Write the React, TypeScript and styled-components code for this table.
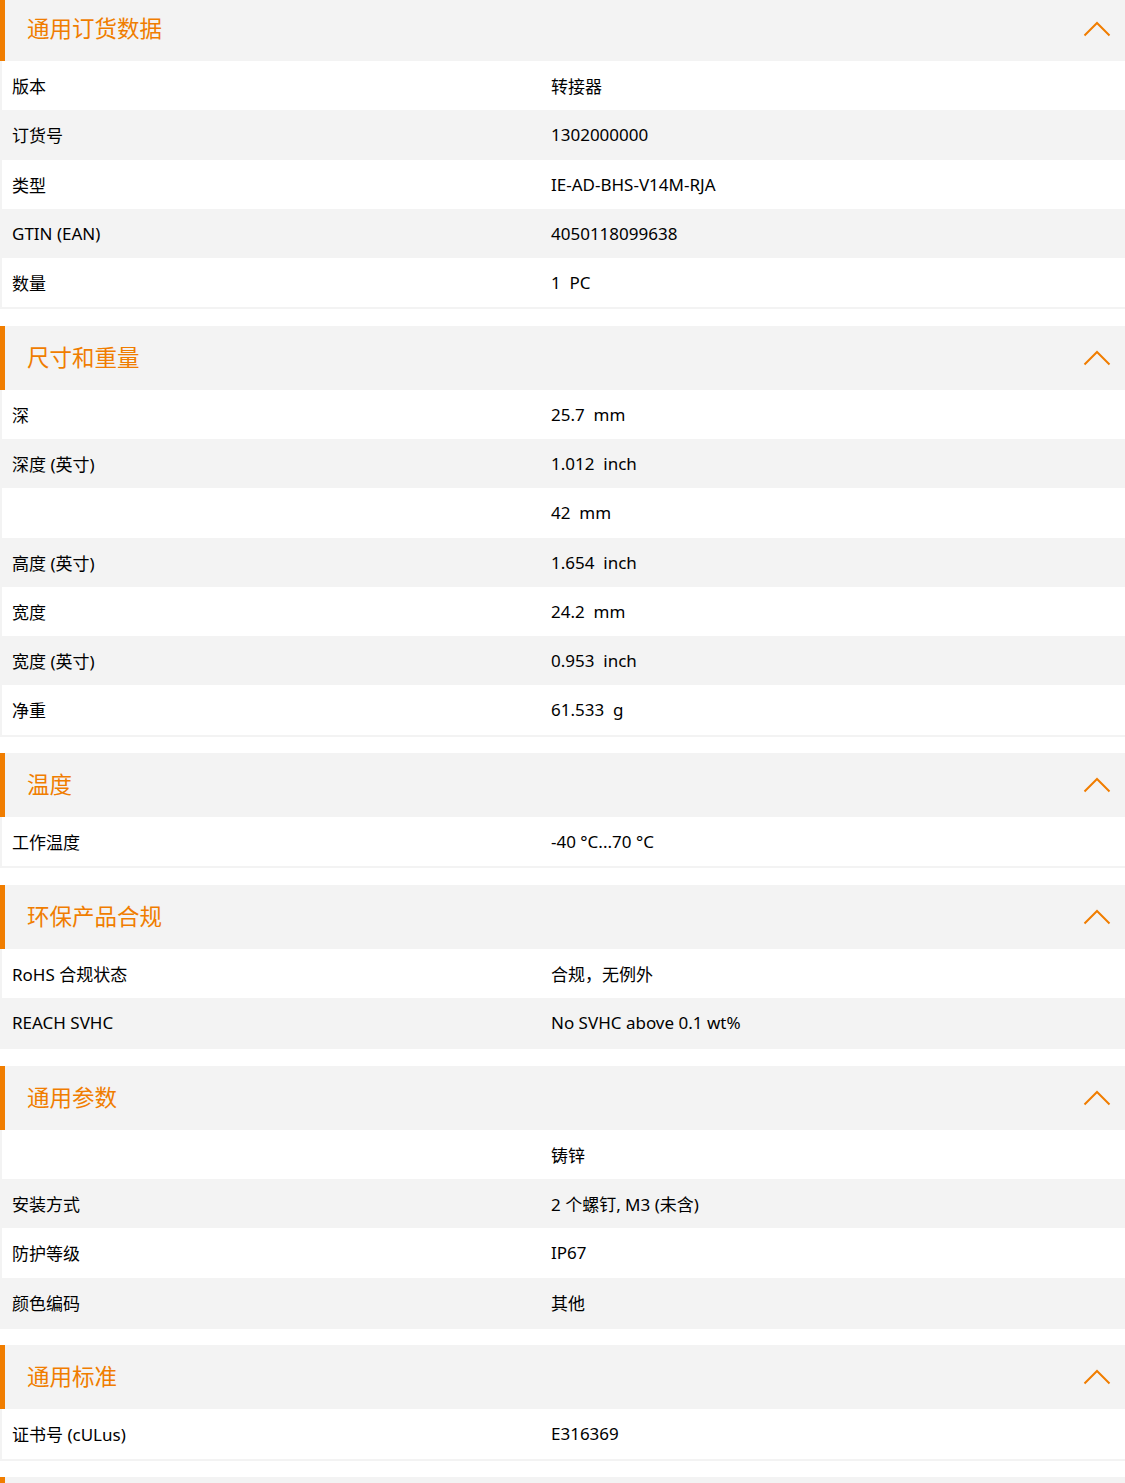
import React from "react";
import styled, { createGlobalStyle } from "styled-components";

const GlobalStyle = createGlobalStyle`
  html, body { margin: 0; padding: 0; background: #ffffff; }
  body {
    font-family: "Noto Sans", "Noto Sans CJK SC", sans-serif;
    color: #000000;
    overflow: hidden;
  }
`;

const ORANGE = "#f07d00";
const GREY = "#f3f3f3";

const Page = styled.div`
  display: flex;
  flex-direction: column;
  gap: 16.5px;
  margin-top: -3px;
  width: 1125px;
`;

const Section = styled.section`
  display: flex;
  flex-direction: column;
`;

const Header = styled.div`
  height: 64px;
  background: ${GREY};
  border-left: 5px solid ${ORANGE};
  display: flex;
  align-items: center;
  justify-content: space-between;
  padding: 0 14px 3px 22px;
  box-sizing: border-box;
`;

const Title = styled.h2`
  margin: 0;
  font-family: "Noto Sans CJK SC", sans-serif;
  font-weight: 400;
  font-size: 22.5px;
  line-height: 1.2;
  color: ${ORANGE};
`;

const Body = styled.div`
  background: ${GREY};
  padding: 0 0 2px 2px;
  display: flex;
  flex-direction: column;
`;

const Row = styled.div<{ $alt: boolean }>`
  height: 49.25px;
  display: grid;
  grid-template-columns: 539px 1fr;
  align-items: center;
  background: ${(p) => (p.$alt ? GREY : "#ffffff")};
  font-size: 17px;
`;

const Cell = styled.div`
  padding-left: 10px;
  white-space: nowrap;
`;

const ChevronSvg = styled.svg`
  margin-top: 3px;
`;

const Chevron = () => (
  <ChevronSvg width="28" height="16" viewBox="0 0 28 16" fill="none">
    <path d="M1.5 14.5 L14 2 L26.5 14.5" stroke={ORANGE} strokeWidth="2" />
  </ChevronSvg>
);

type Item = [string, string];

const sections: { title: string; rows: Item[] }[] = [
  {
    title: "通用订货数据",
    rows: [
      ["版本", "转接器"],
      ["订货号", "1302000000"],
      ["类型", "IE-AD-BHS-V14M-RJA"],
      ["GTIN (EAN)", "4050118099638"],
      ["数量", "1\u00a0\u00a0PC"],
    ],
  },
  {
    title: "尺寸和重量",
    rows: [
      ["深", "25.7\u00a0\u00a0mm"],
      ["深度 (英寸)", "1.012\u00a0\u00a0inch"],
      ["", "42\u00a0\u00a0mm"],
      ["高度 (英寸)", "1.654\u00a0\u00a0inch"],
      ["宽度", "24.2\u00a0\u00a0mm"],
      ["宽度 (英寸)", "0.953\u00a0\u00a0inch"],
      ["净重", "61.533\u00a0\u00a0g"],
    ],
  },
  {
    title: "温度",
    rows: [["工作温度", "-40 °C...70 °C"]],
  },
  {
    title: "环保产品合规",
    rows: [
      ["RoHS 合规状态", "合规，无例外"],
      ["REACH SVHC", "No SVHC above 0.1 wt%"],
    ],
  },
  {
    title: "通用参数",
    rows: [
      ["", "铸锌"],
      ["安装方式", "2 个螺钉, M3 (未含)"],
      ["防护等级", "IP67"],
      ["颜色编码", "其他"],
    ],
  },
  {
    title: "通用标准",
    rows: [["证书号 (cULus)", "E316369"]],
  },
];

export default function App() {
  return (
    <>
      <GlobalStyle />
      <Page>
        {sections.map((s) => (
          <Section key={s.title}>
            <Header>
              <Title>{s.title}</Title>
              <Chevron />
            </Header>
            <Body>
              {s.rows.map(([k, v], i) => (
                <Row key={i} $alt={i % 2 === 1}>
                  <Cell>{k}</Cell>
                  <Cell>{v}</Cell>
                </Row>
              ))}
            </Body>
          </Section>
        ))}
        <Section>
          <Header />
        </Section>
      </Page>
    </>
  );
}
